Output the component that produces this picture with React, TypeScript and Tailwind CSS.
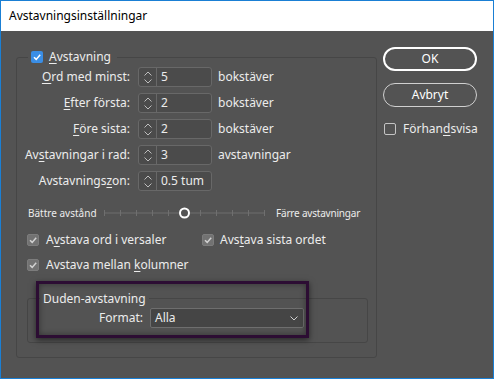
import React from 'react';

const Check = ({ color }: { color: string }) => (
  <svg width="10" height="10" viewBox="0 0 10 10" fill="none">
    <polyline points="2,5.2 4.2,7.4 8.2,2.8" stroke={color} strokeWidth="1.5" />
  </svg>
);

const Box = ({ checked, blue }: { checked?: boolean; blue?: boolean }) => (
  <span
    className={`w-[12px] h-[12px] rounded-[2px] flex items-center justify-center shrink-0 ${
      blue
        ? 'bg-[#3a8ee6]'
        : checked
        ? 'bg-[#727272] border border-[#7c7c7c]'
        : 'border border-[#c4c4c4]'
    }`}
  >
    {checked && <Check color={blue ? '#ffffff' : '#d2d2d2'} />}
  </span>
);

const U = ({ children }: { children: React.ReactNode }) => <span className="underline underline-offset-2">{children}</span>;

const Stepper = ({ value }: { value: string }) => (
  <div className="ml-[8px] w-[74px] h-[20px] flex border border-[#686868] rounded-[3px] bg-[#4b4b4b]">
    <div className="w-[18px] border-r border-[#686868] flex flex-col items-center justify-center gap-[3px]">
      <svg width="8" height="5" viewBox="0 0 8 5" fill="none">
        <polyline points="0.5,4.5 4,1 7.5,4.5" stroke="#bdbdbd" strokeWidth="1" />
      </svg>
      <svg width="8" height="5" viewBox="0 0 8 5" fill="none">
        <polyline points="0.5,0.5 4,4 7.5,0.5" stroke="#bdbdbd" strokeWidth="1" />
      </svg>
    </div>
    <div className="pl-[4px] flex items-center">{value}</div>
  </div>
);

const rows: { label: React.ReactNode; value: string; unit?: string }[] = [
  { label: <><U>O</U>rd med minst:</>, value: '5', unit: 'bokstäver' },
  { label: <><U>E</U>fter första:</>, value: '2', unit: 'bokstäver' },
  { label: <><U>F</U>öre sista:</>, value: '2', unit: 'bokstäver' },
  { label: <>Av<U>s</U>tavningar i rad:</>, value: '3', unit: 'avstavningar' },
  { label: <>Avstavnings<U>z</U>on:</>, value: '0.5 tum' },
];

export default function App() {
  return (
    <div
      className="w-[494px] h-[379px] border border-[#1a7fd4] flex flex-col bg-[#535353] text-[12px] text-[#ececec] leading-none"
      style={{ fontFamily: '"Noto Sans", "Open Sans", sans-serif' }}
    >
      <div className="h-[30px] bg-white pl-[8px] flex items-center text-black">Avstavningsinställningar</div>

      <div className="flex-1 flex pl-[15px] pt-[26px] relative">
        {/* Avstavning group */}
        <div className="w-[361px] h-[301px] border border-[#464646] rounded-[3px] flex flex-col">
          <div className="-mt-[8px] ml-[11px] px-[3px] pr-[6px] w-fit h-[14px] bg-[#535353] flex items-center gap-[6px]">
            <Box checked blue />
            <span><U>A</U>vstavning</span>
          </div>

          <div className="mt-[3px] flex flex-col gap-[6px]">
            {rows.map((r, i) => (
              <div key={i} className="flex items-center h-[20px]">
                <div className="w-[113px] text-right">{r.label}</div>
                <Stepper value={r.value} />
                {r.unit && <div className="ml-[6px]">{r.unit}</div>}
              </div>
            ))}
          </div>

          <div className="mt-[16px] h-[12px] pl-[11px] flex items-center text-[10px]">
            <span className="w-[76px]">Bättre avstånd</span>
            <svg width="161" height="12" viewBox="0 0 161 12" fill="none">
              <line x1="0" y1="6" x2="160" y2="6" stroke="#6f6f6f" strokeWidth="1" />
              {[0, 1, 2, 3, 4, 6, 7, 8, 9, 10].map((t) => (
                <line key={t} x1={t * 16 + 0.5} y1="3" x2={t * 16 + 0.5} y2="9" stroke="#6f6f6f" strokeWidth="1" />
              ))}
              <circle cx="80.5" cy="6" r="4.5" fill="#535353" stroke="#ffffff" strokeWidth="2" />
            </svg>
            <span className="ml-[11px] tracking-[-0.2px]">Färre avstavningar</span>
          </div>

          <div className="mt-[13px] h-[16px] pl-[10px] flex items-center">
            <div className="w-[175px] flex items-center gap-[7px]">
              <Box checked />
              <span>A<U>v</U>stava ord i versaler</span>
            </div>
            <div className="flex items-center gap-[6px]">
              <Box checked />
              <span>Avs<U>t</U>ava sista ordet</span>
            </div>
          </div>

          <div className="mt-[9px] h-[16px] pl-[10px] flex items-center gap-[7px]">
            <Box checked />
            <span>Avstava mellan <U>k</U>olumner</span>
          </div>

          {/* Duden group */}
          <div className="mt-[25px] ml-[10px] w-[341px] h-[45px] border border-[#464646] rounded-[3px] flex flex-col">
            <div className="-mt-[8px] ml-[12px] px-[3px] w-fit h-[16px] bg-[#535353] flex items-center">Duden-avstavning</div>
            <div className="mt-[1px] flex items-center h-[20px]">
              <div className="w-[115px] text-right">Format:</div>
              <div className="ml-[7px] w-[154px] h-[20px] bg-[#454545] border border-[#6e6e6e] rounded-[2px] flex items-center justify-between pl-[4px] pr-[5px]">
                <span>Alla</span>
                <svg width="8" height="5" viewBox="0 0 8 5" fill="none">
                  <polyline points="0.5,0.5 4,4 7.5,0.5" stroke="#cfcfcf" strokeWidth="1" />
                </svg>
              </div>
            </div>
          </div>
        </div>

        {/* Buttons */}
        <div className="ml-[6px] -mt-[10px] flex flex-col w-[94px]">
          <button className="h-[24px] rounded-full border-2 border-white flex items-center justify-center text-white">OK</button>
          <button className="mt-[12px] h-[24px] rounded-full border border-[#d0d0d0] flex items-center justify-center text-white">
            Avbryt
          </button>
          <div className="mt-[16px] h-[12px] ml-[1px] flex items-center gap-[7px]">
            <Box />
            <span>Förhan<U>d</U>svisa</span>
          </div>
        </div>

        {/* highlight annotation */}
        <div className="absolute left-[35px] top-[250px] w-[273px] h-[57px] border-[3px] border-[#2c0d33] shadow-[0_2px_6px_rgba(0,0,0,0.55),inset_0_0_6px_rgba(0,0,0,0.4)]" />
      </div>
    </div>
  );
}
